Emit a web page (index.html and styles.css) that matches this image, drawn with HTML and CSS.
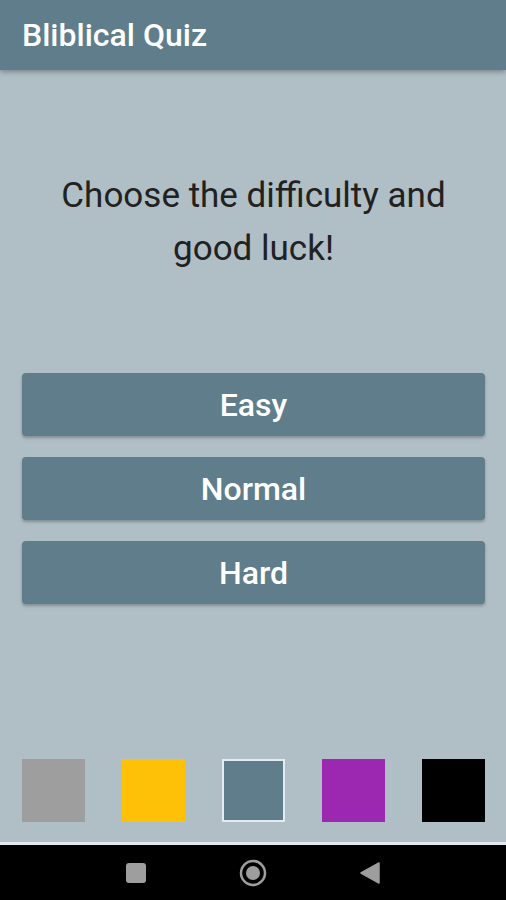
FILE: index.html
```html
<!DOCTYPE html>
<html lang="en">
<head>
    <title>Bliblical Quiz</title>
    <link rel="stylesheet" href="styles.css">
</head>
<body>
    <div class="screen">
        <header class="app-bar">
            <h1 class="app-title">Bliblical Quiz</h1>
        </header>
        <main class="content">
            <p class="question">Choose the difficulty and<br>good luck!</p>
            <div class="levels">
                <button class="level-btn">Easy</button>
                <button class="level-btn">Normal</button>
                <button class="level-btn">Hard</button>
            </div>
            <div class="themes">
                <div class="swatch grey"></div>
                <div class="swatch amber"></div>
                <div class="swatch bluegrey selected"></div>
                <div class="swatch purple"></div>
                <div class="swatch black"></div>
            </div>
        </main>
        <nav class="nav-bar">
            <svg class="nav-icon" width="20" height="20" viewBox="0 0 20 20">
                <rect x="0" y="0" width="20" height="20" rx="3" fill="#9e9e9e"/>
            </svg>
            <svg class="nav-icon" width="28" height="28" viewBox="0 0 28 28">
                <circle cx="14" cy="14" r="12" fill="none" stroke="#9e9e9e" stroke-width="2.5"/>
                <circle cx="14" cy="14" r="7" fill="#9e9e9e"/>
            </svg>
            <svg class="nav-icon" width="20" height="22" viewBox="0 0 20 22">
                <path d="M19 1 L19 21 L1 11 Z" fill="#9e9e9e" stroke="#9e9e9e" stroke-width="1.5" stroke-linejoin="round"/>
            </svg>
        </nav>
    </div>
</body>
</html>
```

FILE: styles.css
```css
body {
    margin: 0;
    font-family: Roboto, "Liberation Sans", sans-serif;
}

.screen {
    width: 506px;
    height: 900px;
    display: flex;
    flex-direction: column;
    background: #b0bec5;
}

.app-bar {
    height: 70px;
    background: #607d8b;
    display: flex;
    align-items: center;
    padding-left: 22px;
    box-shadow: 0 2px 5px rgba(0, 0, 0, 0.3);
    position: relative;
    z-index: 1;
}

.app-title {
    margin: 0;
    color: #fff;
    font-size: 32px;
    font-weight: 500;
}

.content {
    flex: 1;
    display: flex;
    flex-direction: column;
    padding: 0 21px 0 22px;
    border-bottom: 3px solid #e3e9ec;
}

.question {
    margin: 99px 0 0;
    text-align: center;
    font-size: 35px;
    line-height: 53px;
    color: #212121;
}

.levels {
    margin-top: 98px;
    display: flex;
    flex-direction: column;
    gap: 21px;
}

.level-btn {
    height: 63px;
    border: none;
    border-radius: 4px;
    background: #607d8b;
    color: #fff;
    font-family: Roboto, "Liberation Sans", sans-serif;
    font-size: 32px;
    font-weight: 500;
    box-shadow: 0 2px 3px rgba(0, 0, 0, 0.25);
}

.themes {
    margin-top: auto;
    margin-bottom: 20px;
    display: flex;
    justify-content: space-between;
}

.swatch {
    width: 63px;
    height: 63px;
    box-sizing: border-box;
}

.grey { background: #9e9e9e; }
.amber { background: #ffc107; }
.bluegrey { background: #607d8b; }
.purple { background: #9c27b0; }
.black { background: #000; }

.selected {
    border: 2px solid #e3ecf2;
}

.nav-bar {
    height: 55px;
    background: #000;
    display: flex;
    align-items: center;
    justify-content: center;
    gap: 93px;
}
```
